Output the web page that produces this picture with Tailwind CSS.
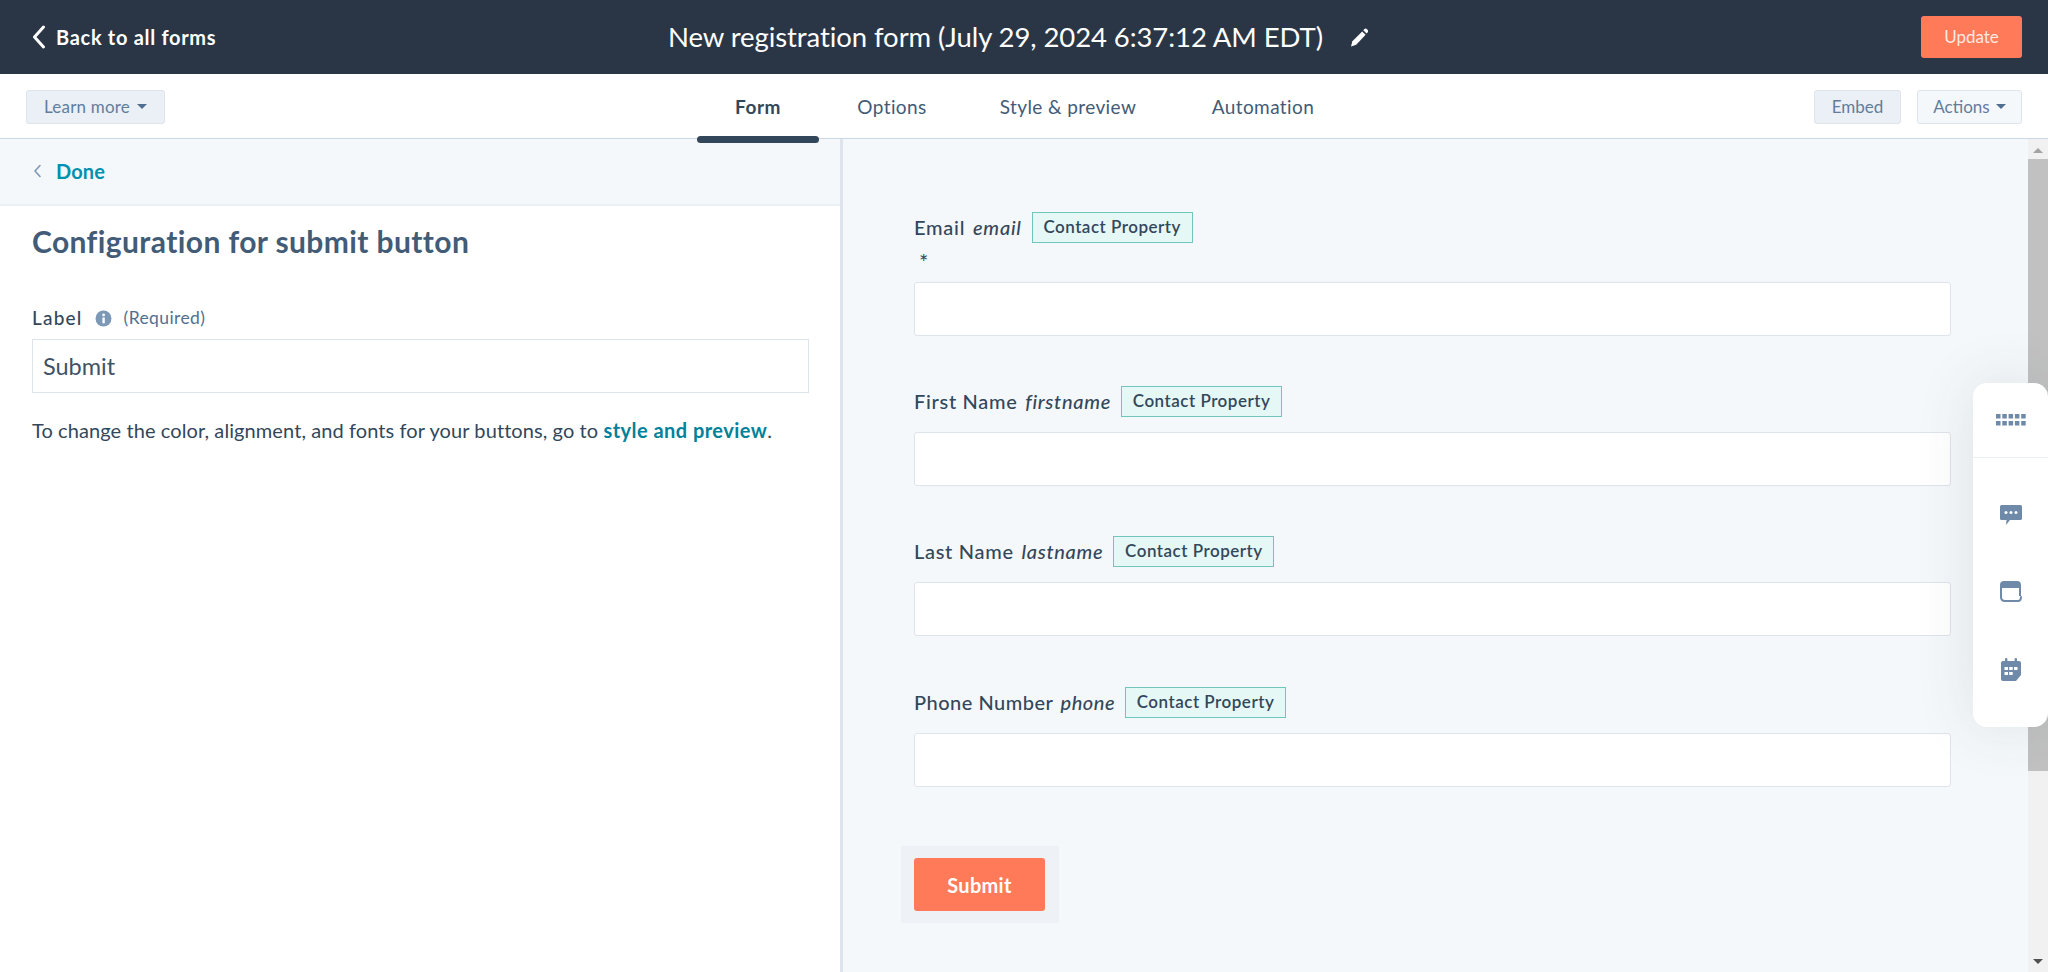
<!doctype html>
<html>
<head>
<meta charset="utf-8">
<script src="https://cdn.jsdelivr.net/npm/@tailwindcss/browser@4"></script>
<title>Form editor</title>
</head>
<body class="h-[972px] w-[2048px] overflow-hidden bg-white font-['Lato',sans-serif] text-[#33475b]">
<div class="flex h-[972px] flex-col">
  <header class="flex h-[74px] shrink-0 items-center bg-[#2a3646] pl-[32px] pr-[26px] text-white">
    <a class="flex w-[636px] items-center gap-[10px] text-[20px] font-bold tracking-[0.7px]">
      <svg class="h-[24px] w-[14px]" viewBox="0 0 14 24" fill="none" stroke="white" stroke-width="3" stroke-linecap="round" stroke-linejoin="round"><path d="M11.5 2 2.5 12l9 10"/></svg>
      Back to all forms
    </a>
    <div class="flex items-center gap-[27px]">
      <h1 class="text-[27.5px] font-normal tracking-[-0.08px]">New registration form (July 29, 2024 6:37:12 AM EDT)</h1>
      <svg class="h-[19px] w-[18px]" viewBox="0 0 18 19" fill="white"><path d="M12.2 3.4 15.6 6.800 6.200 16.700 1 18.500l1.400-5.300z"/><path d="M13.300 2.200l.9-1a2 2 0 0 1 2.800 0l.5.600a2 2 0 0 1 0 2.800l-.9 1z"/></svg>
    </div>
    <button class="ml-auto flex h-[42px] w-[101px] items-center justify-center rounded-[3px] bg-[#ff7a59] text-[17px] text-[#fde8e2]">Update</button>
  </header>
  <nav class="relative mt-[1px] flex h-[64px] shrink-0 items-center justify-between border-b border-[#cbd6e2] px-[26px]">
    <button class="flex h-[34px] w-[139px] items-center justify-center gap-[7px] rounded-[3px] border border-[#dfe3eb] bg-[#eaf0f6] text-[17px] tracking-[0.2px] text-[#627d9a]">Learn more <span class="h-0 w-0 border-x-[5px] border-t-[5px] border-x-transparent border-t-[#506e91]"></span></button>
    <div class="absolute left-[697px] top-0 flex h-[64px] text-[19px] tracking-[0.4px] text-[#425b76]">
      <a class="relative flex w-[122px] items-center justify-center font-bold tracking-[0.6px] text-[#33475b]">Form<span class="absolute bottom-[-4px] left-0 h-[7px] w-full rounded-[4px] bg-[#33475b]"></span></a>
      <a class="flex w-[146px] items-center justify-center">Options</a>
      <a class="flex w-[206px] items-center justify-center">Style &amp; preview</a>
      <a class="flex w-[184px] items-center justify-center">Automation</a>
    </div>
    <div class="flex items-center gap-[16px]">
      <button class="flex h-[34px] w-[87px] items-center justify-center rounded-[3px] border border-[#dfe3eb] bg-[#eaf0f6] text-[17px] text-[#627d9a]">Embed</button>
      <button class="flex h-[34px] w-[105px] items-center justify-center gap-[6px] rounded-[3px] border border-[#dfe3eb] bg-[#f5f8fa] text-[17px] text-[#627d9a]">Actions <span class="h-0 w-0 border-x-[5px] border-t-[5px] border-x-transparent border-t-[#506e91]"></span></button>
    </div>
  </nav>
  <main class="flex min-h-0 flex-1">
    <aside class="w-[843px] shrink-0 border-r-[3px] border-[#dfe3eb] bg-white">
      <div class="flex h-[67px] items-center gap-[14px] border-b-2 border-[#eaf0f6] bg-[#f5f8fa] pb-[2px] pl-[33px]">
        <svg class="h-[14px] w-[9px]" viewBox="0 0 9 14" fill="none" stroke="#7c98b6" stroke-width="1.6" stroke-linecap="round" stroke-linejoin="round"><path d="M7 1.5 2 7l5 5.5"/></svg>
        <a class="text-[20px] font-bold tracking-[0.1px] text-[#0091ae]">Done</a>
      </div>
      <div class="px-[32px]">
        <h2 class="mt-[17px] text-[30px] leading-[36px] font-bold tracking-[0.4px] text-[#425b76]">Configuration for submit button</h2>
        <div class="mt-[47px] flex h-[24px] items-center text-[19px] tracking-[1.2px]">
          <span class="font-medium">Label</span>
          <svg class="ml-[12px] h-[17px] w-[17px]" viewBox="0 0 16 16"><circle cx="8" cy="8" r="7.500" fill="#7c98b6"/><rect x="7" y="7" width="2.200" height="5.500" fill="white"/><circle cx="8.100" cy="4.600" r="1.300" fill="white"/></svg>
          <span class="ml-[12px] text-[17.500px] tracking-[0.4px] text-[#516f90]">(Required)</span>
        </div>
        <input class="mt-[9px] block h-[54px] w-[777px] border border-[#dfe3eb] bg-white px-[10px] text-[23.500px] font-normal text-[#3f5268]" value="Submit" readonly>
        <p class="mt-[23px] text-[20px] leading-[28px] font-normal tracking-[0.09px] text-[#33475b]">To change the color, alignment, and fonts for your buttons, go to <a class="font-bold tracking-[0.45px] text-[#00829b]">style and preview</a>.</p>
      </div>
    </aside>
    <section class="relative min-w-0 flex-1 bg-[#f5f8fa] pl-[71px] pt-[72px]">
      <div class="flex w-[1037px] flex-col">
        <div class="flex h-[32px] items-center text-[20px] font-medium tracking-[0.75px] text-[#33475b]"><span>Email <i class="ml-[2px]">email</i></span><span class="ml-[10px] flex h-[31px] w-[161px] items-center justify-center border border-[#6fc7bb] bg-[#e5f8f6] text-[17px] font-semibold tracking-[0.5px]">Contact Property</span></div>
        <div class="h-[29px] pl-[5px] pt-[6px] text-[22px] leading-[26px]">*</div>
        <div class="mt-[10px] h-[54px] rounded-[3px] border border-[#dfe3eb] bg-white"></div>

        <div class="mt-[49px] flex h-[32px] items-center text-[20px] font-medium tracking-[0.7px] text-[#33475b]"><span>First Name <i class="ml-[2px]">firstname</i></span><span class="ml-[10px] flex h-[31px] w-[161px] items-center justify-center border border-[#6fc7bb] bg-[#e5f8f6] text-[17px] font-semibold tracking-[0.5px]">Contact Property</span></div>
        <div class="mt-[15px] h-[54px] rounded-[3px] border border-[#dfe3eb] bg-white"></div>

        <div class="mt-[49px] flex h-[32px] items-center text-[20px] font-medium tracking-[0.7px] text-[#33475b]"><span>Last Name <i class="ml-[2px]">lastname</i></span><span class="ml-[10px] flex h-[31px] w-[161px] items-center justify-center border border-[#6fc7bb] bg-[#e5f8f6] text-[17px] font-semibold tracking-[0.5px]">Contact Property</span></div>
        <div class="mt-[15px] h-[54px] rounded-[3px] border border-[#dfe3eb] bg-white"></div>

        <div class="mt-[50px] flex h-[32px] items-center text-[20px] font-medium tracking-[0.5px] text-[#33475b]"><span>Phone Number <i class="ml-[2px]">phone</i></span><span class="ml-[10px] flex h-[31px] w-[161px] items-center justify-center border border-[#6fc7bb] bg-[#e5f8f6] text-[17px] font-semibold tracking-[0.5px]">Contact Property</span></div>
        <div class="mt-[15px] h-[54px] rounded-[3px] border border-[#dfe3eb] bg-white"></div>

        <div class="ml-[-13px] mt-[59px] w-[158px] bg-[#eef1f5] px-[13px] py-[12px]">
          <button class="flex h-[53px] w-[131px] items-center justify-center rounded-[3px] bg-[#ff7a59] text-[20px] font-bold tracking-[0.3px] text-white">Submit</button>
        </div>
      </div>

      <div class="absolute inset-y-0 right-0 flex w-[20px] flex-col items-center bg-[#f1f1f1]">
        <span class="mt-[9px] h-0 w-0 border-x-[5px] border-b-[5px] border-x-transparent border-b-[#a3a3a3]"></span>
        <span class="mt-[6px] h-[612px] w-full bg-[#c1c1c1]"></span>
        <span class="mb-[8px] mt-auto h-0 w-0 border-x-[5px] border-t-[5px] border-x-transparent border-t-[#505050]"></span>
      </div>

      <div class="absolute right-0 top-[244px] flex h-[344px] w-[75px] flex-col items-center rounded-[14px] bg-white shadow-[0_0_60px_rgba(45,62,80,0.12)]">
        <div class="flex h-[75px] w-full items-center justify-center border-b border-[#eaf0f6]">
          <svg class="h-[12px] w-[30px]" viewBox="0 0 30 12" fill="#6f8aa8"><rect x="0" y="0" width="4.500" height="4.500"/><rect x="6.300" y="0" width="4.500" height="4.500"/><rect x="12.600" y="0" width="4.500" height="4.500"/><rect x="18.900" y="0" width="4.500" height="4.500"/><rect x="25.200" y="0" width="4.500" height="4.500"/><rect x="0" y="7" width="4.500" height="4.500"/><rect x="6.300" y="7" width="4.500" height="4.500"/><rect x="12.600" y="7" width="4.500" height="4.500"/><rect x="18.900" y="7" width="4.500" height="4.500"/><rect x="25.200" y="7" width="4.500" height="4.500"/></svg>
        </div>
        <svg class="mt-[47px] h-[20px] w-[22px]" viewBox="0 0 22 20"><path d="M1.500 0h19A1.500 1.500 0 0 1 22 1.500v12a1.500 1.500 0 0 1-1.500 1.500H10l-4 5 .5-5h-5A1.500 1.500 0 0 1 0 13.500v-12A1.500 1.500 0 0 1 1.500 0z" fill="#6f8aa8"/><circle cx="6" cy="7.500" r="1.500" fill="white"/><circle cx="11" cy="7.500" r="1.500" fill="white"/><circle cx="16" cy="7.500" r="1.500" fill="white"/></svg>
        <svg class="mt-[56px] h-[21px] w-[22px]" viewBox="0 0 22 21" fill="none"><path d="M1 17V4a3 3 0 0 1 3-3h13a3 3 0 0 1 3 3v11" stroke="#6f8aa8" stroke-width="2"/><path d="M1 3a2 2 0 0 1 2-2h15a2 2 0 0 1 2 2v4H1z" fill="#6f8aa8"/><path d="M1 16c0 2.500 1.500 4 4 4h13c2 0 3-1.500 3-4" stroke="#6f8aa8" stroke-width="2" stroke-linecap="round"/></svg>
        <svg class="mt-[56px] h-[23px] w-[20px]" viewBox="0 0 20 23"><path d="M2 3h16a2 2 0 0 1 2 2v12l-5 6H2a2 2 0 0 1-2-2V5a2 2 0 0 1 2-2z" fill="#6f8aa8"/><rect x="4" y="0" width="2.400" height="5" rx="1" fill="#6f8aa8"/><rect x="13.600" y="0" width="2.400" height="5" rx="1" fill="#6f8aa8"/><g fill="white"><rect x="3.500" y="9" width="3.500" height="3"/><rect x="8.200" y="9" width="3.500" height="3"/><rect x="13" y="9" width="3.500" height="3"/><rect x="3.500" y="14" width="3.500" height="3"/><rect x="8.200" y="14" width="3.500" height="3"/></g></svg>
      </div>
    </section>
  </main>
</div>
</body>
</html>
